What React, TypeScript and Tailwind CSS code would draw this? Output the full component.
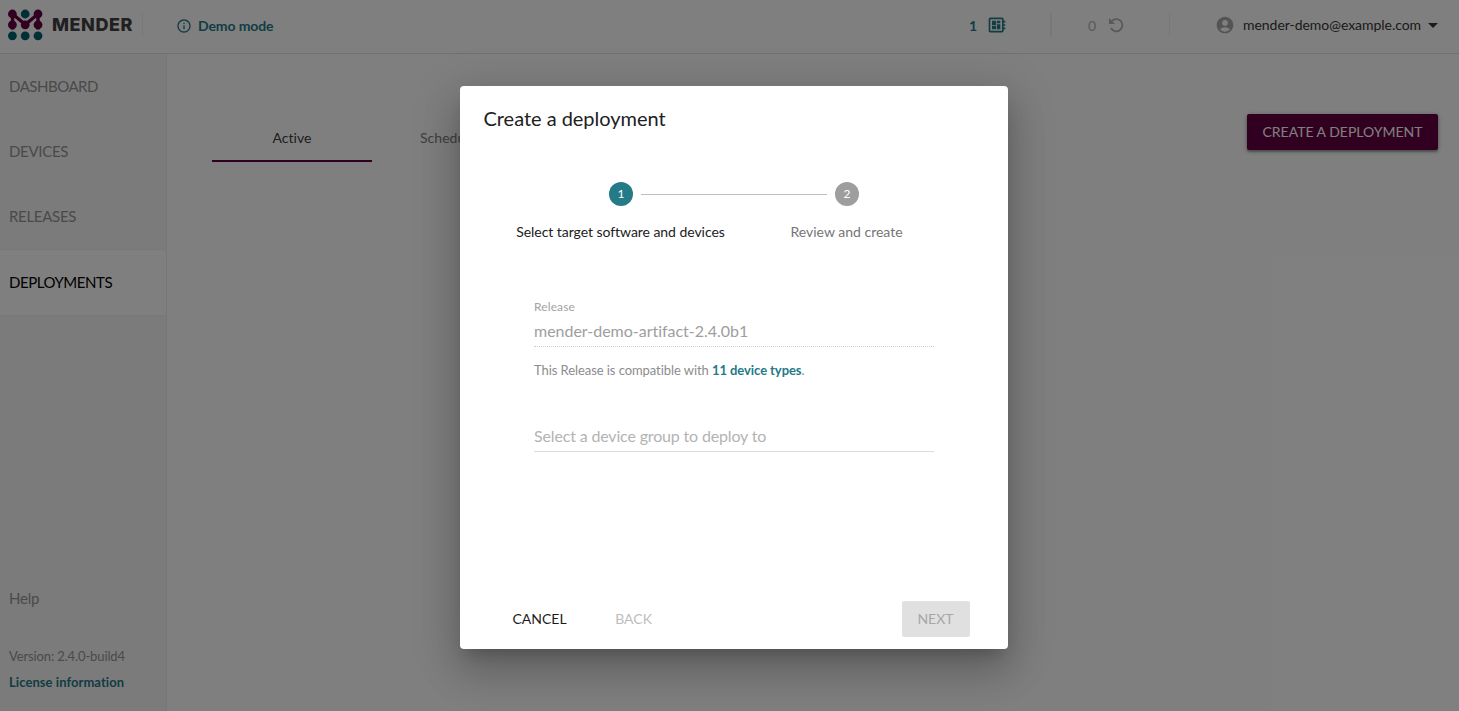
import React from "react";
import { MdAccountCircle, MdArrowDropDown, MdDeveloperBoard, MdInfoOutline } from "react-icons/md";

function Logo() {
  return (
    <div className="flex items-center gap-[9px]">
      <svg width="35" height="32" viewBox="0 0 35 32">
        <path d="M4.6 20.5V5L17.3 15.5L30 5V20.5" fill="none" stroke="#620040" strokeWidth="3.4" />
        <g fill="#620040">
          <circle cx="4.4" cy="5" r="4.4" />
          <circle cx="30" cy="5" r="4.4" />
          <circle cx="4.4" cy="15.8" r="4.4" />
          <circle cx="17.2" cy="15.8" r="4.4" />
          <circle cx="30" cy="15.8" r="4.4" />
        </g>
        <g fill="#00606a">
          <circle cx="17.2" cy="5" r="4.4" />
          <circle cx="4.4" cy="26.8" r="4.4" />
          <circle cx="17.2" cy="26.8" r="4.4" />
          <circle cx="30" cy="26.8" r="4.4" />
        </g>
      </svg>
      <span className="font-[Inter,sans-serif] text-[18px] leading-none font-extrabold tracking-[0.55px] text-[#404041]">MENDER</span>
    </div>
  );
}

function UndoIcon() {
  return (
    <svg width="20" height="20" viewBox="0 0 20 20">
      <path d="M5 7.2A6.1 6.1 0 1 1 4.9 13" fill="none" stroke="currentColor" strokeWidth="1.8" />
      <path d="M3 3V9H9Z" fill="currentColor" />
    </svg>
  );
}

function Header() {
  return (
    <header className="flex h-[54px] shrink-0 border-b border-[#e0e0e0] bg-white">
      <div className="flex w-[142px] items-center pb-[3px] pl-2">
        <Logo />
      </div>
      <div className="mt-[13px] h-6 w-px bg-[#f0f4f4]" />
      <div className="flex w-[826px] items-center gap-[6px] pb-[2px] pl-[33px] text-[14px] font-bold tracking-[-0.1px] text-[#257a87]">
        <MdInfoOutline size={16} />
        <span>Demo mode</span>
      </div>
      <div className="flex w-[81px] items-center gap-[10px] pb-[3px] text-[14px] font-bold text-[#257a87]">
        <span className="w-2">1</span>
        <MdDeveloperBoard size={20} />
      </div>
      <div className="mt-[13px] h-6 w-[2px] bg-[#ecf2f2]" />
      <div className="flex w-[117px] items-center gap-[10px] pb-[3px] pl-[36px] text-[14px] text-[#b2b2b2]">
        <span className="w-2">0</span>
        <UndoIcon />
      </div>
      <div className="mt-[13px] h-6 w-px bg-[#ecf2f2]" />
      <div className="flex flex-1 items-center pb-[4px] pl-[45px] text-[14px] text-[#363636]">
        <MdAccountCircle size={20} className="mr-2 text-[#a8a8a8]" />
        <span className="w-[178px] whitespace-nowrap tracking-[-0.04px]">mender-demo@example.com</span>
        <MdArrowDropDown size={24} />
      </div>
    </header>
  );
}

function Sidebar() {
  return (
    <aside className="flex w-[167px] shrink-0 flex-col border-r border-[#e6f2f1] bg-[#f7f7f7] text-[15px] text-[#949495]">
      <div className="flex h-[65px] items-center pl-[9px] tracking-[-0.48px]">DASHBOARD</div>
      <div className="flex h-[65px] items-center pl-[9px] tracking-[-0.3px]">DEVICES</div>
      <div className="flex h-[65px] items-center pl-[9px] tracking-[-0.3px]">RELEASES</div>
      <div className="flex h-[67px] items-center border-y border-[#eaf4f3] bg-white pl-[9px] tracking-[-0.45px] text-black">DEPLOYMENTS</div>
      <div className="mt-auto pl-[9px] leading-5 tracking-[-0.2px]">Help</div>
      <div className="mt-[38px] pl-[9px] text-[13px] leading-5 tracking-[-0.12px]">Version: 2.4.0-build4</div>
      <div className="mt-[6px] mb-[19px] pl-[9px] text-[13px] leading-5 font-bold tracking-[0.06px] text-[#257a87]">License information</div>
    </aside>
  );
}

function Main() {
  return (
    <main className="flex flex-1 items-start pt-[60px] pl-[45px] text-[14px]">
      <div className="flex h-12 w-[160px] items-center justify-center border-b-2 border-[#620040] tracking-[0.05px] text-[#404041]">Active</div>
      <div className="flex h-12 w-[160px] items-center justify-center pb-[2px] tracking-[0.05px] text-[#808080]">Scheduled</div>
      <button className="mr-[21px] ml-auto h-9 w-[191px] rounded-[2px] bg-[#620040] pb-[2px] text-white shadow-[0_1px_5px_rgba(0,0,0,0.3),0_2px_2px_rgba(0,0,0,0.25)]">CREATE A DEPLOYMENT</button>
    </main>
  );
}

function Step({ number, label, active }: { number: number; label: string; active?: boolean }) {
  return (
    <div className="flex w-[226px] flex-col items-center">
      <div className={active ? "flex size-6 items-center justify-center rounded-full bg-[#257a87] text-[12px] text-white" : "flex size-6 items-center justify-center rounded-full bg-[#9e9e9e] text-[12px] text-white"}>{number}</div>
      <div className={active ? "mt-4 pr-px text-[14px] leading-5 tracking-[-0.05px] text-[#212121]" : "mt-4 pr-px text-[14px] leading-5 tracking-[0.01px] text-[#757575]"}>{label}</div>
    </div>
  );
}

function Dialog() {
  return (
    <section className="flex h-[563px] w-[548px] flex-col rounded-[4px] bg-white shadow-[0_11px_15px_-7px_rgba(0,0,0,0.2),0_24px_38px_3px_rgba(0,0,0,0.14),0_9px_46px_8px_rgba(0,0,0,0.12)]">
      <h2 className="pt-4 pl-[23.5px] text-[20px] leading-8 tracking-[-0.03px] text-[#212121]">Create a deployment</h2>
      <div className="relative mt-12 flex pl-12">
        <Step number={1} label="Select target software and devices" active />
        <Step number={2} label="Review and create" />
        <div className="absolute top-3 left-[181px] h-px w-[186px] bg-[#bdbdbd]" />
      </div>
      <div className="mt-[57px] ml-[74px] w-[400px]">
        <div className="text-[12px] leading-4 tracking-[0.12px] text-[#a3a3a3]">Release</div>
        <div className="h-[32px] border-b border-dotted border-[#d0d0d0] pt-[4px] text-[16px] leading-6 tracking-[-0.02px] text-[#9e9e9e]">mender-demo-artifact-2.4.0b1</div>
        <div className="mt-[13px] text-[13px] leading-5 tracking-[-0.07px] text-[#8c8c8d]">
          This Release is compatible with <b className="text-[#257a87]">11 device types</b>.
        </div>
        <div className="mt-[44px] h-[28px] border-b border-[#dcdcdc] text-[16px] leading-6 tracking-[-0.16px] text-[#b3b3b3]">Select a device group to deploy to</div>
      </div>
      <div className="mt-auto mb-3 flex h-9 items-center pr-[38px] pl-[52.5px] text-[14px] text-[#1c1c1c]">
        <button className="pb-[2px]">CANCEL</button>
        <button className="ml-[48.5px] pb-[2px] text-[#bdbdbd]">BACK</button>
        <button className="ml-auto h-9 w-[68px] rounded-[2px] bg-[#e0e0e0] pr-px pb-[2px] text-[#a6a6a6]">NEXT</button>
      </div>
    </section>
  );
}

export default function App() {
  return (
    <div className="relative flex h-[711px] w-[1459px] flex-col overflow-hidden bg-white font-[Lato,sans-serif]">
      <Header />
      <div className="flex flex-1">
        <Sidebar />
        <Main />
      </div>
      <div className="absolute inset-0 flex items-start justify-center bg-black/50 pt-[86px] pl-[9px]">
        <Dialog />
      </div>
    </div>
  );
}
